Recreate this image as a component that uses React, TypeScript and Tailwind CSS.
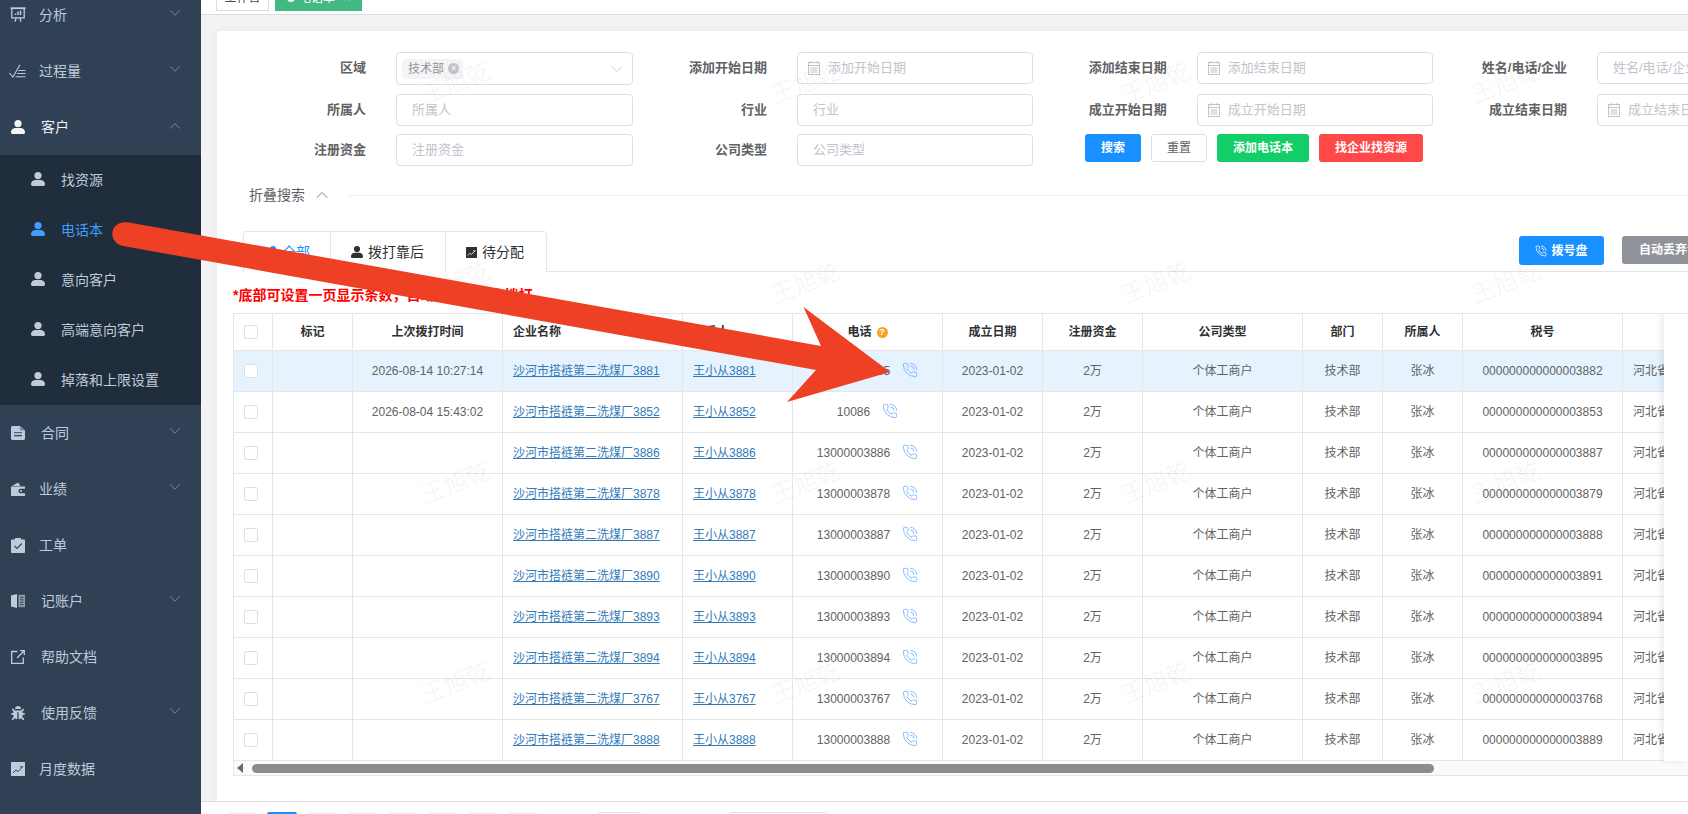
import { ChevronDown, ChevronUp, PhoneCall } from "lucide-react";
import { FaBug } from "react-icons/fa";
import type { ReactNode } from "react";

const font = { fontFamily: '"Liberation Sans", "Noto Sans CJK SC", sans-serif' };

function UserIcon({ className = "w-[14px] h-[14px]" }: { className?: string }) {
  return (
    <svg viewBox="0 0 14 14" className={className} fill="currentColor">
      <ellipse cx="7" cy="3.6" rx="3.6" ry="3.6" />
      <path d="M0 12.2C0 9.6 2.4 8 4.4 8h5.2C11.6 8 14 9.6 14 12.2c0 1.2-.8 1.8-1.8 1.8H1.8C.8 14 0 13.4 0 12.2z" />
    </svg>
  );
}

function PresentIcon() {
  return (
    <svg viewBox="0 0 16 16" className="w-4 h-4" fill="none" stroke="currentColor" strokeWidth="1.3">
      <path d="M0.5 1.2h15" strokeWidth="1.8" />
      <path d="M1.8 1.5v9.3h12.4V1.5" />
      <path d="M5 14.8l1.2-4M11 14.8l-1.2-4" />
      <path d="M5.5 8V6.4M8 8V4.4M10.5 8V3.4" strokeWidth="1.5" />
    </svg>
  );
}

function CheckListIcon() {
  return (
    <svg viewBox="0 0 18 14" className="w-[18px] h-[14px]" fill="none" stroke="currentColor" strokeWidth="1.1">
      <path d="M0.5 9l3.4 4L11 0.8" />
      <path d="M9.5 6.5h7M8 9.5h8.5M6.5 12.8h10" />
    </svg>
  );
}

function DocIcon() {
  return (
    <svg viewBox="0 0 14 14" className="w-[14px] h-[14px]" fill="currentColor">
      <path d="M1.5 0H9l5 4.5V12.5c0 .8-.7 1.500-1.500 1.500h-11C.7 14 0 13.300 0 12.500v-11C0 .7.7 0 1.500 0z" />
      <path d="M3 6.800h8M3 9.600h8" stroke="#304156" strokeWidth="1.1" />
      <path d="M8.800.4v4.200H13.600" fill="#304156" opacity="0.5" />
    </svg>
  );
}

function WalletIcon() {
  return (
    <svg viewBox="0 0 14 14" className="w-[14px] h-[14px]" fill="currentColor">
      <path d="M1 4l6.200-3.600L9.400 4z" />
      <path d="M0 4.600h14v2.200H9.600a2.200 2.200 0 000 4.400H14V14H0z" />
      <circle cx="10" cy="9" r="1" />
    </svg>
  );
}

function ClipboardIcon() {
  return (
    <svg viewBox="0 0 14 15" className="w-[14px] h-[15px]" fill="currentColor">
      <path d="M4 0h6v1.500h3c.6 0 1 .4 1 1V14c0 .6-.4 1-1 1H1c-.6 0-1-.4-1-1V2.500c0-.6.4-1 1-1h3z" />
      <path d="M3.500 8l2.500 2.500L10.800 5.500" fill="none" stroke="#304156" strokeWidth="1.1" />
    </svg>
  );
}

function BookIcon() {
  return (
    <svg viewBox="0 0 14 14" className="w-[14px] h-[14px]" fill="currentColor">
      <path d="M0 1.500L6 0v14l-6-1.500z" />
      <path d="M7.500 0.800H14v12.400H7.500z" opacity="0.65" />
      <path d="M9 3.500h3.500M9 5.800h3.500M9 8.200h3.500M9 10.500h3.500" stroke="#304156" strokeWidth="0.9" />
    </svg>
  );
}

function LinkOutIcon() {
  return (
    <svg viewBox="0 0 14 14" className="w-[14px] h-[14px]" fill="none" stroke="currentColor" strokeWidth="1.3">
      <path d="M6.500 1.500H0.700V13.300H12.300V7.500" />
      <path d="M6 8l7-7M9 .7h4.300V5" />
    </svg>
  );
}

function AreaIcon({ className = "w-[14px] h-[14px]", line = "#304156" }: { className?: string; line?: string }) {
  return (
    <svg viewBox="0 0 14 14" className={className}>
      <rect width="14" height="14" fill="currentColor" />
      <path d="M2 11l3-3 2 1.500 4.500-4.500M9 4.800h3" fill="none" stroke={line} strokeWidth="1" />
    </svg>
  );
}

function CalendarIcon() {
  return (
    <svg viewBox="0 0 12 14" className="w-3 h-[14px] shrink-0 text-[#c0c4cc]" fill="none" stroke="currentColor" strokeWidth="1">
      <rect x="0.500" y="1.500" width="11" height="12" />
      <path d="M3 0v2.500M9 0v2.500M.5 4.500h11M2.500 7h7M2.500 9h7M2.500 11h7" />
    </svg>
  );
}

type MenuItem = { label: string; icon: ReactNode; textAt: string; arrow?: boolean };

const topMenu: MenuItem[] = [
  { label: "分析", icon: <PresentIcon />, textAt: "w-[39px] pl-[10px]", arrow: true },
  { label: "过程量", icon: <CheckListIcon />, textAt: "w-[39px] pl-[9px]", arrow: true },
];

const bottomMenu: MenuItem[] = [
  { label: "合同", icon: <DocIcon />, textAt: "w-[41px] pl-[11px]", arrow: true },
  { label: "业绩", icon: <WalletIcon />, textAt: "w-[39px] pl-[11px]", arrow: true },
  { label: "工单", icon: <ClipboardIcon />, textAt: "w-[39px] pl-[11px]" },
  { label: "记账户", icon: <BookIcon />, textAt: "w-[41px] pl-[11px]", arrow: true },
  { label: "帮助文档", icon: <LinkOutIcon />, textAt: "w-[41px] pl-[11px]" },
  { label: "使用反馈", icon: <FaBug className="w-[14px] h-[14px]" />, textAt: "w-[41px] pl-[11px]", arrow: true },
  { label: "月度数据", icon: <AreaIcon />, textAt: "w-[39px] pl-[11px]" },
];

const subMenu = ["找资源", "电话本", "意向客户", "高端意向客户", "掉落和上限设置"];

function MenuRow({ item }: { item: MenuItem }) {
  return (
    <div className="h-14 flex items-center text-sm text-[#bfcbd9]">
      <div className={`${item.textAt} shrink-0 flex items-center`}>{item.icon}</div>
      <span>{item.label}</span>
      {item.arrow && (
        <ChevronDown className="ml-auto mr-[17px] -mt-[4px] text-[#93a2b4]" size={18} strokeWidth={1} />
      )}
    </div>
  );
}

function Sidebar() {
  return (
    <aside className="w-[201px] shrink-0 bg-[#304156] overflow-hidden">
      <div className="-mt-[13px]">
        {topMenu.map((item) => (
          <MenuRow key={item.label} item={item} />
        ))}
        <div className="h-14 flex items-center text-sm text-[#f4f4f5]">
          <div className="w-[41px] pl-[11px] shrink-0 flex items-center">
            <UserIcon />
          </div>
          <span>客户</span>
          <ChevronUp className="ml-auto mr-[17px] -mt-[2px] text-[#93a2b4]" size={18} strokeWidth={1} />
        </div>
        <div className="bg-[#1f2d3d]">
          {subMenu.map((label) => (
            <div
              key={label}
              className={`h-[50px] flex items-center pl-[31px] text-sm ${
                label === "电话本" ? "text-[#409eff]" : "text-[#bfcbd9]"
              }`}
            >
              <UserIcon className="w-[14px] h-[14px] mr-4 -mt-[2px]" />
              <span>{label}</span>
            </div>
          ))}
        </div>
        {bottomMenu.map((item) => (
          <MenuRow key={item.label} item={item} />
        ))}
      </div>
    </aside>
  );
}

function TopTabs() {
  return (
    <div className="h-[15px] shrink-0 overflow-hidden border-b border-[#d8dce5] bg-white pl-[15px] flex gap-[6px] items-end text-xs">
      <div className="w-[53px] h-[26px] mb-[3px] border border-[#d8dce5] text-[#495060] flex items-center justify-center">
        工作台
      </div>
      <div className="w-[87px] h-[26px] mb-[3px] bg-[#42b983] text-white flex items-center justify-center gap-1">
        <span className="w-2 h-2 rounded-full bg-white" />
        电话本
        <span className="ml-1">×</span>
      </div>
    </div>
  );
}

function Field({ label, wide, children }: { label: string; wide?: boolean; children: ReactNode }) {
  return (
    <div className="flex items-start">
      <label className="w-[134px] h-8 flex items-center justify-end font-bold text-[13px] text-[#606266]">
        {label}
      </label>
      <div className={`ml-[30px] ${wide ? "w-[237px]" : "w-[236px]"}`}>{children}</div>
    </div>
  );
}

function TextInput({ text, date }: { text: string; date?: boolean }) {
  return (
    <div
      className={`h-8 border border-[#dcdfe6] rounded bg-white flex items-center text-[13px] text-[#c0c4cc] ${
        date ? "pl-[10px] gap-2" : "pl-[15px]"
      }`}
    >
      {date && <CalendarIcon />}
      <span className="whitespace-nowrap overflow-hidden">{text}</span>
    </div>
  );
}

function SearchForm() {
  return (
    <div className="pl-[15px] pt-[21px] grid grid-cols-[401px_400px_400px_400px] grid-rows-[42px_40px_32px]">
      <Field label="区域" wide>
        <div className="h-[33px] border border-[#dcdfe6] rounded bg-white flex items-center pl-[5px] pr-[5px]">
          <div className="h-5 w-[61px] bg-[#f4f4f5] rounded flex items-center pl-[6px] text-xs text-[#909399]">
            技术部
            <span className="ml-1 w-[11px] h-[11px] rounded-full bg-[#c0c4cc] text-white text-[9px] leading-[11px] text-center">
              ×
            </span>
          </div>
          <ChevronDown className="ml-auto text-[#c0c4cc]" size={20} strokeWidth={1} />
        </div>
      </Field>
      <Field label="添加开始日期">
        <TextInput text="添加开始日期" date />
      </Field>
      <Field label="添加结束日期" wide>
        <TextInput text="添加结束日期" date />
      </Field>
      <Field label="姓名/电话/企业">
        <TextInput text="姓名/电话/企业" />
      </Field>
      <Field label="所属人" wide>
        <TextInput text="所属人" />
      </Field>
      <Field label="行业">
        <TextInput text="行业" />
      </Field>
      <Field label="成立开始日期" wide>
        <TextInput text="成立开始日期" date />
      </Field>
      <Field label="成立结束日期">
        <TextInput text="成立结束日期" date />
      </Field>
      <Field label="注册资金" wide>
        <TextInput text="注册资金" />
      </Field>
      <Field label="公司类型">
        <TextInput text="公司类型" />
      </Field>
      <div className="col-span-2 pl-[52px] flex gap-[10px] items-start text-xs text-white">
        <button className="w-14 h-7 rounded-[3px] bg-[#1890ff] font-bold">搜索</button>
        <button className="w-14 h-7 rounded-[3px] bg-white border border-[#dcdfe6] text-[#606266]">重置</button>
        <button className="w-[92px] h-7 rounded-[3px] bg-[#13ce66] font-bold">添加电话本</button>
        <button className="w-[104px] h-7 rounded-[3px] bg-[#ff4949] font-bold">找企业找资源</button>
      </div>
    </div>
  );
}

function TabsRow() {
  return (
    <div className="ml-[26px] mt-6 h-[41px] flex items-stretch border-b border-[#dfe4ed]">
      <div className="h-[41px] flex border border-b-0 border-[#dfe4ed] rounded-t bg-white text-sm text-[#303133]">
        <div className="w-[87px] pl-[23px] flex items-center gap-[3px] text-[#1890ff] border-r border-[#dfe4ed]">
          <UserIcon className="w-3 h-3" />
          全部
        </div>
        <div className="w-[115px] pl-[20px] flex items-center gap-[5px] border-r border-[#dfe4ed]">
          <UserIcon className="w-3 h-3" />
          拨打靠后
        </div>
        <div className="w-[100px] pl-[20px] flex items-center gap-[5px]">
          <AreaIcon className="w-[11px] h-[11px]" line="#ffffff" />
          待分配
        </div>
      </div>
      <div className="ml-[972px] mt-[5px] flex gap-[18px] items-start text-xs text-white">
        <button className="w-[85px] h-[29px] rounded-[3px] bg-[#1890ff] font-bold flex items-center justify-center gap-1">
          <PhoneCall size={12} strokeWidth={1.5} />
          拨号盘
        </button>
        <button className="w-[110px] h-7 rounded-[3px] bg-[#909399] font-bold pl-[17px] text-left whitespace-nowrap">
          自动丢弃设置
        </button>
      </div>
    </div>
  );
}

const colWidths = ["w-[39px]", "w-[80px]", "w-[150px]", "w-[180px]", "w-[110px]", "w-[150px]", "w-[100px]", "w-[100px]", "w-[160px]", "w-[80px]", "w-[80px]", "w-[160px]", "w-[200px]"];

const rows = [
  { time: "2026-08-14 10:27:14", id: "3881", phone: "13000003885", tax: "3882", on: true },
  { time: "2026-08-04 15:43:02", id: "3852", phone: "10086", tax: "3853" },
  { time: "", id: "3886", phone: "13000003886", tax: "3887" },
  { time: "", id: "3878", phone: "13000003878", tax: "3879" },
  { time: "", id: "3887", phone: "13000003887", tax: "3888" },
  { time: "", id: "3890", phone: "13000003890", tax: "3891" },
  { time: "", id: "3893", phone: "13000003893", tax: "3894" },
  { time: "", id: "3894", phone: "13000003894", tax: "3895" },
  { time: "", id: "3767", phone: "13000003767", tax: "3768" },
  { time: "", id: "3888", phone: "13000003888", tax: "3889" },
];

function Checkbox() {
  return <span className="block ml-[10px] w-[14px] h-[14px] border border-[#dcdfe6] rounded-[2px] bg-white" />;
}

function Th({ children, left }: { children?: ReactNode; left?: boolean }) {
  return (
    <th className={`border-r border-b border-[#e6e6e6] font-bold text-xs text-[#303133] ${left ? "text-left pl-[10px]" : "text-center"}`}>
      {children}
    </th>
  );
}

function Td({ children, left }: { children?: ReactNode; left?: boolean }) {
  return (
    <td className={`border-r border-b border-[#e6e6e6] text-xs text-[#606266] whitespace-nowrap overflow-hidden ${left ? "text-left pl-[10px]" : "text-center"}`}>
      {children}
    </td>
  );
}

function DataTable() {
  return (
    <div className="relative ml-4 mt-2 border-l border-t border-b border-[#e6e6e6] overflow-hidden">
      <table className="table-fixed border-separate border-spacing-0 w-[1589px]">
        <colgroup>
          {colWidths.map((w, i) => (
            <col key={i} className={w} />
          ))}
        </colgroup>
        <thead>
          <tr className="h-[37px]">
            <Th>
              <Checkbox />
            </Th>
            <Th>标记</Th>
            <Th>上次拨打时间</Th>
            <Th left>企业名称</Th>
            <Th left>联系人</Th>
            <Th>
              <span className="inline-flex items-center gap-[5px]">
                电话
                <span className="w-[11px] h-[11px] rounded-full bg-[#f5a623] text-white text-[9px] leading-[11px] text-center">?</span>
              </span>
            </Th>
            <Th>成立日期</Th>
            <Th>注册资金</Th>
            <Th>公司类型</Th>
            <Th>部门</Th>
            <Th>所属人</Th>
            <Th>税号</Th>
            <Th left></Th>
          </tr>
        </thead>
        <tbody>
          {rows.map((row) => (
            <tr key={row.id} className={`h-[41px] ${row.on ? "bg-[#e6f3ff]" : "bg-transparent"}`}>
              <Td>
                <Checkbox />
              </Td>
              <Td />
              <Td>{row.time}</Td>
              <Td left>
                <a className="text-[#337ab7] underline">沙河市搭裢第二洗煤厂{row.id}</a>
              </Td>
              <Td left>
                <a className="text-[#337ab7] underline">王小从{row.id}</a>
              </Td>
              <Td>
                <span className="inline-flex items-center gap-3">
                  {row.phone}
                  <PhoneCall size={16} strokeWidth={1.25} className="text-[#6aaefc] -mt-[3px]" />
                </span>
              </Td>
              <Td>2023-01-02</Td>
              <Td>2万</Td>
              <Td>个体工商户</Td>
              <Td>技术部</Td>
              <Td>张冰</Td>
              <Td>00000000000000{row.tax}</Td>
              <Td left>河北省邢台市沙河市</Td>
            </tr>
          ))}
        </tbody>
      </table>
      <div className="h-[14px] bg-[#fafafa] flex items-center">
        <span className="ml-[3px] w-0 h-0 border-y-[5px] border-y-transparent border-r-[6px] border-r-[#6b6b6b]" />
        <span className="ml-[9px] w-[1182px] h-[9px] rounded-full bg-[#8c8c8c]" />
      </div>
      <div className="absolute right-0 top-0 w-[24px] h-[447px] bg-white shadow-[-3px_0_6px_rgba(0,0,0,0.08)]" />
    </div>
  );
}

function Pagination() {
  const pages = ["", "1", "2", "3", "4", "5", "6", "7"];
  return (
    <div className="h-[13px] shrink-0 border-t border-[#dcdcdc] bg-white overflow-hidden flex items-start pt-[10px] pl-[26px] text-xs">
      <div className="flex gap-[10px]">
        {pages.map((p, i) => (
          <span key={i} className={`w-[30px] h-7 rounded-[2px] text-center leading-7 ${i === 1 ? "bg-[#1890ff] text-white" : "bg-[#f4f4f5] text-[#606266]"}`}>
            {p}
          </span>
        ))}
      </div>
      <span className="ml-[60px] w-[44px] h-7 border border-[#dcdfe6] rounded-[3px]" />
      <span className="ml-[88px] w-[99px] h-7 border border-[#dcdfe6] rounded-[3px]" />
    </div>
  );
}

function Watermarks() {
  return (
    <div className="absolute left-[281px] -top-[17px] grid grid-cols-[repeat(4,350px)] auto-rows-[200px] pointer-events-none">
      {Array.from({ length: 16 }, (_, i) => (
        <div key={i} className="flex items-center justify-center">
          <span className="-rotate-[22deg] text-2xl text-black/[0.05] whitespace-nowrap">王旭乾</span>
        </div>
      ))}
    </div>
  );
}

function RedArrow() {
  return (
    <svg className="absolute left-0 top-0 pointer-events-none" width="1688" height="814" viewBox="0 0 1688 814">
      <path
        d="M129 222.500 L821 346 L803.500 307 L890 372 L787 402 L816 370 L123 246 C107 243 109 219 129 222.500 Z"
        fill="#ee4024"
      />
    </svg>
  );
}

export default function App() {
  return (
    <div className="relative w-[1688px] h-[814px] overflow-hidden flex bg-white" style={font}>
      <Sidebar />
      <main className="flex-1 min-w-0 flex flex-col">
        <TopTabs />
        <div className="flex-1 min-h-0 bg-[#f3f3f3] pl-4 pt-4">
          <div className="h-full bg-white rounded-tl shadow-[0_0_8px_rgba(0,0,0,0.06)]">
            <SearchForm />
            <div className="ml-8 mt-[17px] h-6 flex items-center text-sm text-[#606266]">
              折叠搜索
              <ChevronUp className="ml-[7px] text-[#606266]" size={20} strokeWidth={1} />
              <span className="ml-4 flex-1 h-px bg-[#f0f0f0]" />
            </div>
            <TabsRow />
            <p className="ml-4 mt-[14px] h-[19px] leading-[19px] font-bold text-sm text-[#ff0000] whitespace-nowrap">
              *底部可设置一页显示条数，自动按顺序逐个拨打
            </p>
            <DataTable />
          </div>
        </div>
        <Pagination />
      </main>
      <Watermarks />
      <RedArrow />
    </div>
  );
}
